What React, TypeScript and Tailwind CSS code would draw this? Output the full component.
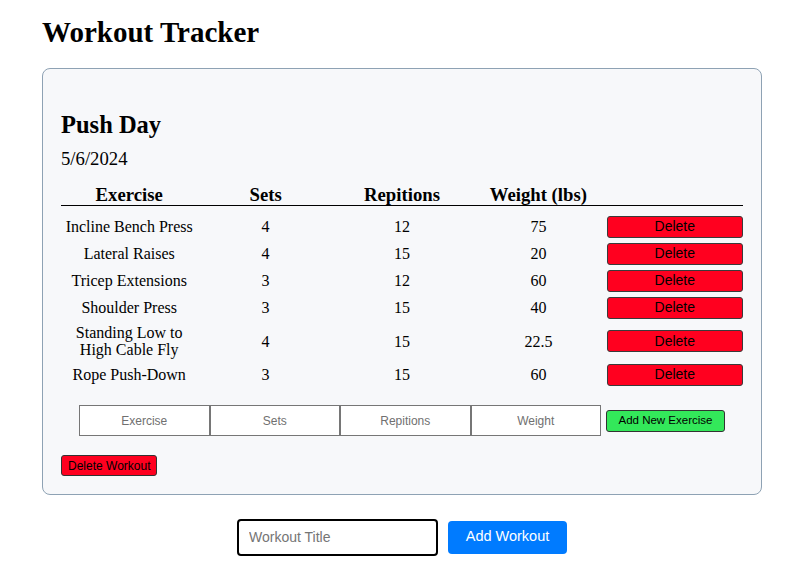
import React from 'react'

interface Exercise {
  name: React.ReactNode
  sets: string
  reps: string
  weight: string
  tall?: boolean
}

const exercises: Exercise[] = [
  { name: 'Incline Bench Press', sets: '4', reps: '12', weight: '75' },
  { name: 'Lateral Raises', sets: '4', reps: '15', weight: '20' },
  { name: 'Tricep Extensions', sets: '3', reps: '12', weight: '60' },
  { name: 'Shoulder Press', sets: '3', reps: '15', weight: '40' },
  {
    name: (
      <>
        Standing Low to
        <br />
        High Cable Fly
      </>
    ),
    sets: '4',
    reps: '15',
    weight: '22.5',
    tall: true,
  },
  { name: 'Rope Push-Down', sets: '3', reps: '15', weight: '60' },
]

const serif = "font-['Liberation_Serif',serif]"
const sans = "font-['Liberation_Sans',Arial,sans-serif]"

export default function App() {
  return (
    <div className={`min-h-screen bg-white text-black ${serif} px-[42px] pt-[16px] pb-6`}>
      <h1 className="text-[29px] leading-[32px] font-bold">Workout Tracker</h1>

      {/* Workout card */}
      <div className="mt-[20px] w-[720px] rounded-[8px] border border-[#8ea2b4] bg-[#f7f8fa] px-[18px] pt-[42px] pb-[17px]">
        <h2 className="text-[24.5px] leading-[28px] font-bold">Push Day</h2>
        <p className="mt-[9px] text-[18.72px] leading-[21px]">5/6/2024</p>

        {/* Table */}
        <div className="mt-[14px]">
          <div className="grid grid-cols-5 h-[23px] border-b border-black text-[18.72px] font-bold leading-[24px] text-center">
            <div>Exercise</div>
            <div>Sets</div>
            <div>Repitions</div>
            <div>Weight (lbs)</div>
            <div />
          </div>
          <div className="mt-[7px]">
            {exercises.map((ex, i) => (
              <div
                key={i}
                className={`grid grid-cols-5 items-center text-center text-[16px] leading-[17px] ${
                  ex.tall ? 'h-[40px]' : 'h-[27px]'
                }`}
              >
                <div>{ex.name}</div>
                <div>{ex.sets}</div>
                <div>{ex.reps}</div>
                <div>{ex.weight}</div>
                <div>
                  <button
                    className={`w-full h-[22px] rounded-[3px] border border-[#3a3a3a] bg-[#ff001f] text-[14px] ${sans}`}
                  >
                    Delete
                  </button>
                </div>
              </div>
            ))}
          </div>
        </div>

        {/* New exercise row */}
        <div className={`mt-[17px] flex items-center justify-center ${sans}`}>
          {['Exercise', 'Sets', 'Repitions', 'Weight'].map((p) => (
            <input
              key={p}
              placeholder={p}
              className="w-[130.5px] h-[31px] border border-[#767676] bg-white text-center text-[12px] placeholder:text-[#707070]"
            />
          ))}
          <button className="ml-[5px] w-[119px] h-[22px] rounded-[3px] border border-[#333] bg-[#33e85a] text-[11.5px]">
            Add New Exercise
          </button>
        </div>

        <button
          className={`mt-[19px] h-[21px] px-[6px] rounded-[3px] border border-[#333] bg-[#ff001f] text-[12px] ${sans}`}
        >
          Delete Workout
        </button>
      </div>

      {/* New workout */}
      <div className={`mt-[24px] w-[720px] flex items-center justify-center gap-[10px] ${sans}`}>
        <input
          placeholder="Workout Title"
          className="w-[201px] h-[37px] rounded-[4px] border-2 border-black bg-white px-[10px] text-[14px] placeholder:text-[#757575]"
        />
        <button className="w-[119px] h-[33px] rounded-[4px] bg-[#007bff] text-white text-[14.5px]">
          Add Workout
        </button>
      </div>
    </div>
  )
}
